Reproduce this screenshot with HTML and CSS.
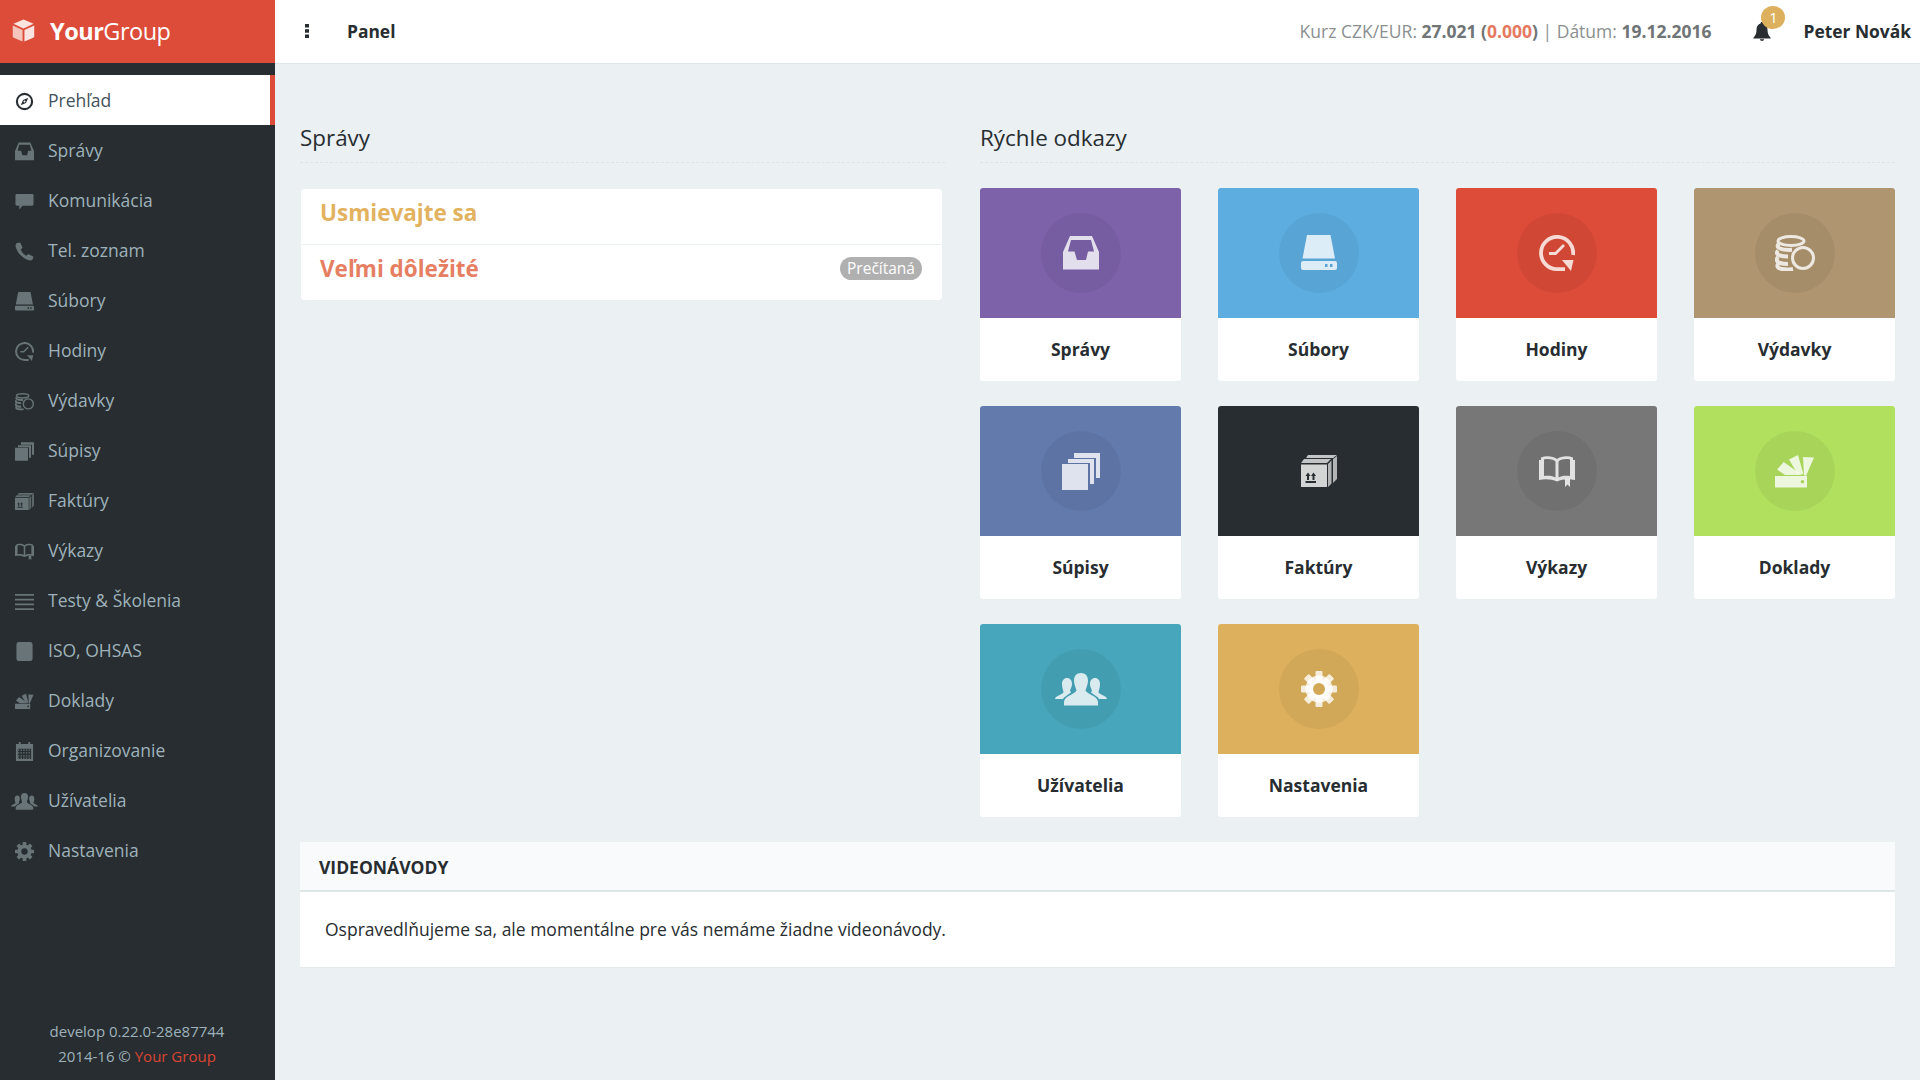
FILE: index.html
```html
<!DOCTYPE html>
<html lang="sk">
	<head>
		<meta charset="utf-8"/>
		<title>YourGroup - Panel</title>
		<link rel="stylesheet" href="styles.css">
	</head>
	<body>
		<svg class="sprite" xmlns="http://www.w3.org/2000/svg">
			<symbol id="i-cube" viewBox="0 0 24 24">
				<path fill="currentColor" d="M12 .5 22.500 5 12 9.800 1.500 5Z"/>
				<path fill="currentColor" d="M.8 6.800 11 11.500V23.500L1.800 19.500 .8 18.500Z" opacity=".8"/>
				<path fill="currentColor" d="M23.200 6.800V18.500L22.200 19.500 13 23.500V11.500Z"/>
			</symbol>
			<symbol id="i-kebab" viewBox="0 0 6 14">
				<rect x="1" y="0" width="4" height="3.5" fill="currentColor"/>
				<rect x="1" y="5.2" width="4" height="3.5" fill="currentColor"/>
				<rect x="1" y="10.5" width="4" height="3.5" fill="currentColor"/>
			</symbol>
			<symbol id="i-bell" viewBox="0 0 18 19">
				<path fill="currentColor" d="M9 0C10 0 10.500 .7 10.500 1.500 13.500 2.300 14.500 5 14.500 8 14.500 11.500 15.500 13.500 17.500 15.500V16.500H.5V15.500C2.500 13.500 3.500 11.500 3.500 8 3.500 5 4.500 2.300 7.500 1.500 7.500 .7 8 0 9 0ZM6.800 17.300H11.200C11 18.400 10 19 9 19S7 18.400 6.800 17.300Z"/>
			</symbol>
			<symbol id="i-compass" viewBox="0 0 20 20">
				<circle cx="10" cy="10" r="8" fill="none" stroke="currentColor" stroke-width="2.200"/>
				<path fill="currentColor" d="M14 6 11.500 11.500 6 14 8.500 8.500ZM10 9A1 1 0 1 0 10 11 1 1 0 0 0 10 9Z" fill-rule="evenodd"/>
			</symbol>
			<symbol id="i-inbox" viewBox="0 0 36 34">
				<path fill="currentColor" fill-rule="evenodd" d="M7 0H29L36 16V33.500H0V16ZM8 4 5 15.500H11.500L14 24H23L25 15.500H31L28 4Z"/>
			</symbol>
			<symbol id="i-bubble" viewBox="0 0 20 20">
				<path fill="currentColor" d="M2 2H18A1.500 1.500 0 0 1 19.500 3.500V13A1.500 1.500 0 0 1 18 14.500H8L4.500 18.500V14.500H2A1.500 1.500 0 0 1 .5 13V3.500A1.500 1.500 0 0 1 2 2Z"/>
			</symbol>
			<symbol id="i-phone" viewBox="0 0 20 20">
				<path fill="currentColor" d="M2 1 5.500 .5 8 6 6 8C6.800 10.500 9 13 12 14.500L14 12.500 19.500 15.500 18.500 18.500C17.500 19.800 15.500 19.800 13 18.800 7 16.300 2.500 11 .8 5.500 .3 3.500 .8 2 2 1Z"/>
			</symbol>
			<symbol id="i-drive" viewBox="0 0 36 36">
				<path fill="currentColor" d="M6 0H29.500L34 23.500H1.500Z"/>
				<path fill="currentColor" fill-rule="evenodd" d="M2 26H34A2 2 0 0 1 36 28V33A2 2 0 0 1 34 35H2A2 2 0 0 1 0 33V28A2 2 0 0 1 2 26ZM24 29V32H26.500V29ZM29 29V32H31.500V29Z"/>
			</symbol>
			<symbol id="i-clock" viewBox="0 0 36 36">
				<path fill="none" stroke="currentColor" stroke-width="3.800" d="M34.100 20A16.100 16.100 0 1 0 18 34.100H26"/>
				<path fill="none" stroke="currentColor" stroke-width="2.800" d="M10 18.500H16.500L25 10"/>
				<path fill="currentColor" d="M23 25H34.500L32 36Z"/>
			</symbol>
			<symbol id="i-coins" viewBox="0 0 40 36">
				<g fill="none" stroke="currentColor">
					<ellipse cx="16" cy="6" rx="13" ry="4.500" stroke-width="3"/>
					<path stroke-width="4" d="M3.500 9C2 11 2.500 12.500 5 13.500 8 14.800 13 15 17 14.800"/>
					<path stroke-width="4" d="M3 15.500C1 18 2 19.500 5 20.500 7.500 21.300 10 21.500 13 21.500"/>
					<path stroke-width="4" d="M3 22C.5 25 2 27 5 28 7.500 28.800 10 29 13 29"/>
					<path stroke-width="4" d="M3 29C1.500 31.500 3 33 6 33.800 9 34.500 14 34.800 18 34"/>
					<circle cx="28" cy="23" r="10.500" stroke-width="3"/>
				</g>
			</symbol>
			<symbol id="i-pages" viewBox="0 0 38 37">
				<path fill="currentColor" d="M12 0H38V25H34V5H12Z"/>
				<path fill="currentColor" d="M6 6H32V31H28V10H6Z"/>
				<rect y="11" width="26" height="26" fill="currentColor"/>
			</symbol>
			<symbol id="i-box" viewBox="0 0 36 32">
				<path fill="currentColor" d="M7 0H36L32 3H5ZM3 4H30L26 8H0Z" opacity=".9"/>
				<path fill="currentColor" d="M32 4 36 1V24L32 28ZM27 9 30.500 5.500V28.500L27 32Z" opacity=".8"/>
				<path fill="currentColor" fill-rule="evenodd" d="M0 9.500H26V32H0ZM6 21V25H8V21H9.500L7 17.500 4.500 21ZM11.500 21V25H13.500V21H15L12.500 17.500 10 21ZM4.500 26V28H15V26Z"/>
			</symbol>
			<symbol id="i-book" viewBox="0 0 36 32">
				<path fill="currentColor" fill-rule="evenodd" d="M18 4C14 1 7 .5 2 2.500V5H0V25C6 23.500 13 24 18 26.500 23 24 30 23.500 36 25V5H34V2.500C29 .5 22 1 18 4ZM16.500 6.500C13.500 4 9 3.500 5 4.500V21C9 20.500 13.500 20.500 16.500 22.500ZM19.500 6.500C22.500 4 27 3.500 31 4.500V21C27 20.500 22.500 20.500 19.500 22.500Z"/>
				<path fill="currentColor" d="M26 24H31V32L28.500 29.500 26 32Z"/>
			</symbol>
			<symbol id="i-list" viewBox="0 0 20 18">
				<path fill="none" stroke="currentColor" stroke-width="1.800" d="M0 2H20M0 7H20M0 12H20M0 17H20"/>
			</symbol>
			<symbol id="i-note" viewBox="0 0 18 20">
				<path fill="currentColor" d="M3 0H15A2.500 2.500 0 0 1 17.500 2.500V17.500A2.500 2.500 0 0 1 15 20H3A2.500 2.500 0 0 1 .5 17.500V2.500A2.500 2.500 0 0 1 3 0Z"/>
			</symbol>
			<symbol id="i-swatch" viewBox="0 0 40 33">
				<path fill="currentColor" fill-rule="evenodd" d="M0 21H32V32.500H0ZM27.500 25A1.800 1.800 0 1 0 27.500 28.600 1.800 1.800 0 0 0 27.500 25Z"/>
				<path fill="currentColor" d="M2 14.500 8.700 7 27 20H10Z"/>
				<path fill="currentColor" d="M14 4.500 23 0 28.500 19.500 22 18Z"/>
				<path fill="currentColor" d="M28 2 39 2.500 31 21 29 20Z"/>
			</symbol>
			<symbol id="i-calendar" viewBox="0 0 18 20">
				<path fill="currentColor" fill-rule="evenodd" d="M0 2H3V0H5V2H13V0H15V2H18V20H0ZM2 7V18H16V7Z"/>
				<path fill="none" stroke="currentColor" stroke-width="1.300" stroke-dasharray="1.500 1.300" d="M2 8.500H16M2 11.500H16M2 14.500H16M2 17H16"/>
			</symbol>
			<symbol id="i-users" viewBox="0 0 52 33">
				<path fill="currentColor" d="M12 5C15 5 17 7.500 17 11 17 14 15.500 16 15 17.500L16 19.500 9 24.500 8 26H0C0 23 7 21.500 8.500 19.500 8.500 18 7 15 7 11 7 7.500 9 5 12 5Z"/>
				<path fill="currentColor" d="M40 5C37 5 35 7.500 35 11 35 14 36.500 16 37 17.500L36 19.500 43 24.500 44 26H52C52 23 45 21.500 43.500 19.500 43.500 18 45 15 45 11 45 7.500 43 5 40 5Z"/>
				<path fill="currentColor" d="M26 0C30.500 0 33 3 33 7.500 33 12 31 15 30.500 17.500 31 20.500 43 23 43 29V32.500H9V29C9 23 21 20.500 21.500 17.500 21 15 19 12 19 7.500 19 3 21.500 0 26 0Z"/>
			</symbol>
			<symbol id="i-gear" viewBox="0 0 36 36">
				<g fill="currentColor">
					<rect x="14.500" y="0" width="7" height="36" rx="1"/>
					<rect x="14.500" y="0" width="7" height="36" rx="1" transform="rotate(45 18 18)"/>
					<rect x="14.500" y="0" width="7" height="36" rx="1" transform="rotate(90 18 18)"/>
					<rect x="14.500" y="0" width="7" height="36" rx="1" transform="rotate(135 18 18)"/>
					<circle cx="18" cy="18" r="13.500"/>
				</g>
				<circle class="gear-hole" cx="18" cy="18" r="6"/>
			</symbol>
		</svg>

		<div class="layout">
			<aside class="sidebar">
				<a class="brand" href="#">
					<svg class="brand-icon"><use href="#i-cube"/></svg>
					<span class="brand-name"><b>Your</b>Group</span>
				</a>
				<nav class="menu">
					<a class="menu-item active" href="#"><span class="menu-icon"><svg class="ic-compass"><use href="#i-compass"/></svg></span>Prehľad</a>
					<a class="menu-item" href="#"><span class="menu-icon"><svg class="ic-m"><use href="#i-inbox"/></svg></span>Správy</a>
					<a class="menu-item" href="#"><span class="menu-icon"><svg class="ic-m"><use href="#i-bubble"/></svg></span>Komunikácia</a>
					<a class="menu-item" href="#"><span class="menu-icon"><svg class="ic-m"><use href="#i-phone"/></svg></span>Tel. zoznam</a>
					<a class="menu-item" href="#"><span class="menu-icon"><svg class="ic-m"><use href="#i-drive"/></svg></span>Súbory</a>
					<a class="menu-item" href="#"><span class="menu-icon"><svg class="ic-m"><use href="#i-clock"/></svg></span>Hodiny</a>
					<a class="menu-item" href="#"><span class="menu-icon"><svg class="ic-m"><use href="#i-coins"/></svg></span>Výdavky</a>
					<a class="menu-item" href="#"><span class="menu-icon"><svg class="ic-m"><use href="#i-pages"/></svg></span>Súpisy</a>
					<a class="menu-item" href="#"><span class="menu-icon"><svg class="ic-m"><use href="#i-box"/></svg></span>Faktúry</a>
					<a class="menu-item" href="#"><span class="menu-icon"><svg class="ic-m"><use href="#i-book"/></svg></span>Výkazy</a>
					<a class="menu-item" href="#"><span class="menu-icon"><svg class="ic-m"><use href="#i-list"/></svg></span>Testy &amp; Školenia</a>
					<a class="menu-item" href="#"><span class="menu-icon"><svg class="ic-m"><use href="#i-note"/></svg></span>ISO, OHSAS</a>
					<a class="menu-item" href="#"><span class="menu-icon"><svg class="ic-m"><use href="#i-swatch"/></svg></span>Doklady</a>
					<a class="menu-item" href="#"><span class="menu-icon"><svg class="ic-m"><use href="#i-calendar"/></svg></span>Organizovanie</a>
					<a class="menu-item" href="#"><span class="menu-icon"><svg class="ic-users"><use href="#i-users"/></svg></span>Užívatelia</a>
					<a class="menu-item" href="#"><span class="menu-icon"><svg class="ic-m"><use href="#i-gear"/></svg></span>Nastavenia</a>
				</nav>
				<div class="sidebar-foot">
					develop 0.22.0-28e87744<br/>
					2014-16 © <a href="#">Your Group</a>
				</div>
			</aside>

			<div class="main">
				<header class="topbar">
					<svg class="kebab"><use href="#i-kebab"/></svg>
					<span class="topbar-title">Panel</span>
					<div class="topbar-info">Kurz CZK/EUR: <b>27.021 (<span class="rate">0.000</span>)</b> | Dátum: <b>19.12.2016</b></div>
					<div class="bell">
						<svg class="bell-icon"><use href="#i-bell"/></svg>
						<span class="bell-badge">1</span>
					</div>
					<span class="topbar-user">Peter Novák</span>
				</header>

				<div class="content">
					<div class="columns">
						<section class="col-left">
							<h2 class="col-title">Správy</h2>
							<div class="news">
								<div class="news-row"><span class="news-title warn">Usmievajte sa</span></div>
								<div class="news-row"><span class="news-title danger">Veľmi dôležité</span><span class="pill">Prečítaná</span></div>
							</div>
						</section>
						<section class="col-right">
							<h2 class="col-title">Rýchle odkazy</h2>
							<div class="tiles">
								<a class="tile" href="#"><div class="tile-top purple"><span class="tile-circle"><svg class="t-inbox"><use href="#i-inbox"/></svg></span></div><div class="tile-label">Správy</div></a>
								<a class="tile" href="#"><div class="tile-top blue"><span class="tile-circle"><svg class="t-drive"><use href="#i-drive"/></svg></span></div><div class="tile-label">Súbory</div></a>
								<a class="tile" href="#"><div class="tile-top red"><span class="tile-circle"><svg class="t-clock"><use href="#i-clock"/></svg></span></div><div class="tile-label">Hodiny</div></a>
								<a class="tile" href="#"><div class="tile-top tan"><span class="tile-circle"><svg class="t-coins"><use href="#i-coins"/></svg></span></div><div class="tile-label">Výdavky</div></a>
								<a class="tile" href="#"><div class="tile-top indigo"><span class="tile-circle"><svg class="t-pages"><use href="#i-pages"/></svg></span></div><div class="tile-label">Súpisy</div></a>
								<a class="tile" href="#"><div class="tile-top dark"><span class="tile-circle"><svg class="t-box"><use href="#i-box"/></svg></span></div><div class="tile-label">Faktúry</div></a>
								<a class="tile" href="#"><div class="tile-top gray"><span class="tile-circle"><svg class="t-book"><use href="#i-book"/></svg></span></div><div class="tile-label">Výkazy</div></a>
								<a class="tile" href="#"><div class="tile-top green"><span class="tile-circle"><svg class="t-swatch"><use href="#i-swatch"/></svg></span></div><div class="tile-label">Doklady</div></a>
								<a class="tile" href="#"><div class="tile-top teal"><span class="tile-circle"><svg class="t-users"><use href="#i-users"/></svg></span></div><div class="tile-label">Užívatelia</div></a>
								<a class="tile" href="#"><div class="tile-top gold"><span class="tile-circle"><svg class="t-gear"><use href="#i-gear"/></svg></span></div><div class="tile-label">Nastavenia</div></a>
							</div>
						</section>
					</div>

					<section class="panel">
						<div class="panel-head">VIDEONÁVODY</div>
						<div class="panel-body">Ospravedlňujeme sa, ale momentálne pre vás nemáme žiadne videonávody.</div>
					</section>
				</div>
			</div>
		</div>
	</body>
</html>
```

FILE: styles.css
```css
* {
	box-sizing: border-box;
}
html, body {
	height: 100%;
}
body {
	margin: 0;
	background: #ebf0f3;
	color: #272d30;
	font-family: "Open Sans", "Liberation Sans", sans-serif;
	font-size: 16px;
}
a {
	text-decoration: none;
	color: inherit;
}
svg {
	display: block;
}
.sprite {
	display: none;
}
.gear-hole {
	fill: var(--hole, #272d30);
}
.layout {
	display: flex;
	height: 1080px;
	overflow: hidden;
}

/* sidebar */
.sidebar {
	display: flex;
	flex-direction: column;
	flex: 0 0 275px;
	width: 275px;
	background: #272d30;
	color: #9fb2bb;
}
.brand {
	display: flex;
	align-items: center;
	height: 63px;
	padding: 0 0 2px 12px;
	background: #dd4b39;
	color: #fff;
}
.brand-icon {
	width: 23px;
	height: 23px;
	margin-right: 15px;
	color: #fbe3df;
}
.brand-name {
	font-size: 23.5px;
	letter-spacing: -0.5px;
}
.brand-name b {
	font-weight: 700;
}
.menu {
	padding-top: 12px;
}
.menu-item {
	display: flex;
	align-items: center;
	height: 50px;
	font-size: 17.5px;
}
.menu-icon {
	display: flex;
	justify-content: center;
	flex: 0 0 48px;
	padding-top: 2px;
	color: #687477;
}
.ic-m {
	width: 19px;
	height: 19px;
}
.ic-users {
	width: 27px;
	height: 17px;
}
.ic-compass {
	width: 19px;
	height: 19px;
}
.menu-item.active {
	background: #fff;
	color: #44525b;
	border-right: 5px solid #dd4b39;
}
.menu-item.active .menu-icon {
	color: #272d30;
}
.sidebar-foot {
	margin-top: auto;
	padding: 0 1px 11px 0;
	font-size: 15px;
	line-height: 25px;
	text-align: center;
}
.sidebar-foot a {
	color: #dc4433;
}

/* top bar */
.main {
	flex: 1;
	min-width: 0;
}
.topbar {
	display: flex;
	align-items: center;
	height: 64px;
	padding: 0 0 2px 29px;
	background: #fff;
	border-bottom: 1px solid #dfe6e9;
}
.kebab {
	width: 6px;
	height: 14px;
	margin-right: 37px;
	color: #272d30;
}
.topbar-title, .topbar-user {
	font-weight: 700;
	font-size: 17.4px;
	color: #272d30;
}
.topbar-info {
	margin-left: auto;
	color: #8b8f91;
	font-size: 17.5px;
}
.topbar-info b {
	color: #6f7476;
}
.rate {
	color: #e5795f;
}
.bell {
	position: relative;
	margin-left: 42px;
	margin-right: 32px;
}
.bell-icon {
	width: 18px;
	height: 19px;
	margin-top: 2px;
	color: #272d30;
}
.bell-badge {
	position: absolute;
	left: 8px;
	top: -14px;
	width: 24px;
	height: 23px;
	line-height: 23px;
	border-radius: 50%;
	background: #ddb05d;
	color: #fff;
	font-size: 15px;
	text-align: center;
}
.topbar-user {
	white-space: nowrap;
	margin-right: 9px;
}

/* content */
.content {
	padding: 58px 25px 0;
}
.columns {
	display: flex;
	gap: 35px;
}
.col-left {
	flex: 0 0 645px;
}
.col-right {
	flex: 1;
}
.col-title {
	margin: 0 0 25px;
	padding: 1px 0 9px;
	border-bottom: 1px dashed #dde3e6;
	font-size: 22.4px;
	line-height: 30px;
	font-weight: 400;
}
.col-left .col-title {
	margin-bottom: 26px;
}
.news {
	margin: 0 3px 0 1px;
	background: #fff;
	border-radius: 4px;
}
.news-row {
	display: flex;
	align-items: center;
	justify-content: space-between;
	height: 55px;
	padding: 0 20px 9px 19px;
}
.news-row + .news-row {
	height: 56px;
	border-top: 1px solid #ebf0f3;
}
.news-title {
	font-size: 22.5px;
	font-weight: 700;
}
.warn {
	color: #e2b25f;
}
.danger {
	color: #e67e62;
}
.pill {
	height: 23px;
	padding: 0 7px;
	line-height: 23px;
	border-radius: 12px;
	background: #b0b0b0;
	color: #fff;
	font-size: 15.5px;
}

/* tiles */
.tiles {
	display: grid;
	grid-template-columns: repeat(4, 201px);
	column-gap: 37px;
	row-gap: 25px;
	width: 100%;
}
.tile {
	display: block;
	background: #fff;
	border-radius: 3px;
	overflow: hidden;
}
.tile-top {
	display: flex;
	align-items: center;
	justify-content: center;
	height: 130px;
}
.tile-circle {
	display: flex;
	align-items: center;
	justify-content: center;
	width: 80px;
	height: 80px;
	border-radius: 50%;
	background: rgba(0, 0, 0, 0.05);
	color: rgba(255, 255, 255, 0.8);
}
.tile-label {
	height: 63px;
	line-height: 63px;
	text-align: center;
	font-size: 17.5px;
	font-weight: 700;
}
.purple { background: #7d61a9; }
.blue { background: #5dade0; }
.red { background: #dd4b39; }
.tan { background: #af9570; }
.indigo { background: #637aad; }
.dark { background: #272d30; }
.dark .tile-circle { background: none; }
.gray { background: #777; }
.green { background: #b0e05e; }
.teal { background: #47a6bb; }
.gold { background: #ddb05d; --hole: #d2a857; }
.t-inbox { width: 36px; height: 34px; }
.t-drive { width: 36px; height: 36px; }
.t-clock { width: 36px; height: 36px; }
.t-coins { width: 40px; height: 36px; }
.t-pages { width: 38px; height: 37px; }
.t-box { width: 36px; height: 32px; }
.t-book { width: 36px; height: 32px; }
.t-swatch { width: 40px; height: 33px; }
.t-users { width: 52px; height: 33px; }
.t-gear { width: 36px; height: 36px; }

/* panel */
.panel {
	margin-top: 25px;
	background: #fff;
	border-bottom: 1px solid #e3e9ec;
}
.panel-head {
	height: 50px;
	padding-left: 19px;
	line-height: 50px;
	background: #f9fafc;
	border-bottom: 2px solid #dfe6e9;
	font-size: 17.5px;
	font-weight: 700;
}
.panel-body {
	height: 75px;
	padding-left: 25px;
	line-height: 75px;
	font-size: 17.5px;
}
```
